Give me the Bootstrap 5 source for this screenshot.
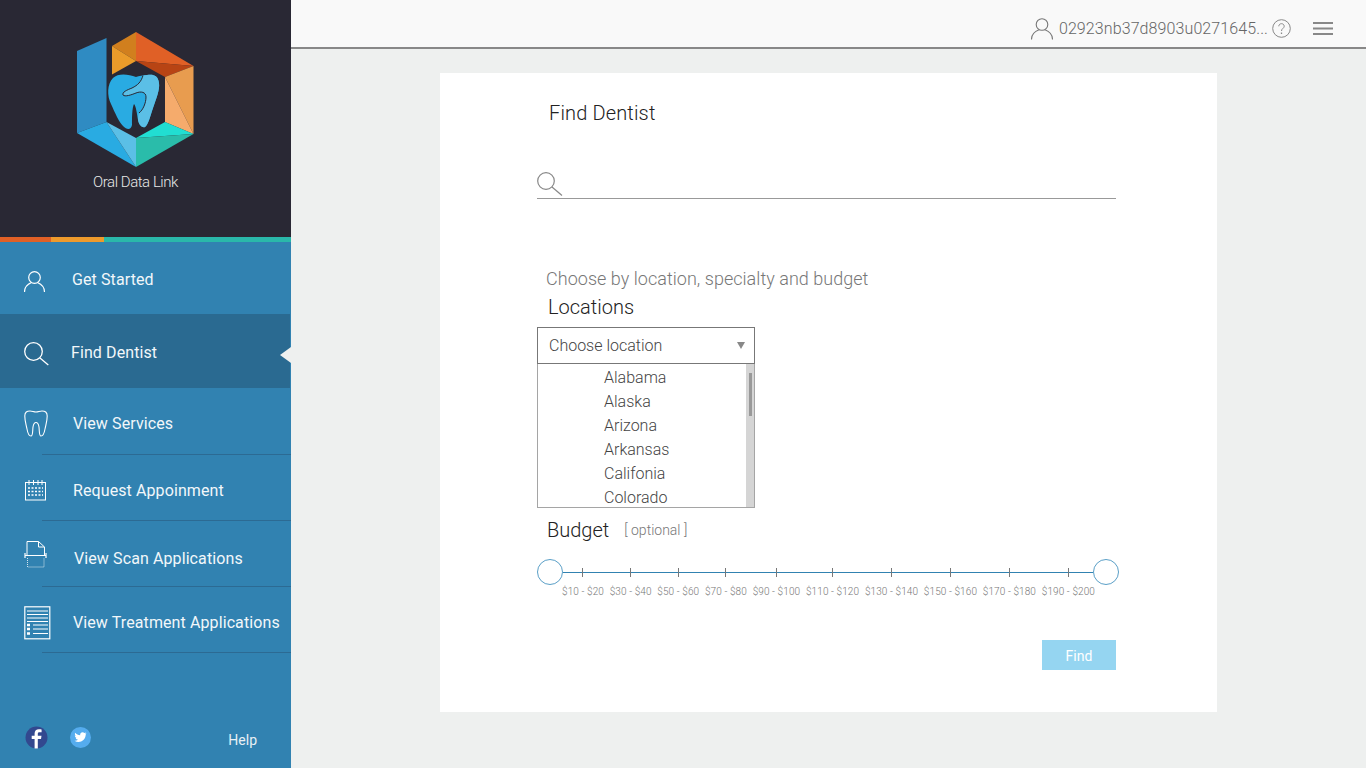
<!DOCTYPE html>
<html lang="en">
<head>
    <meta charset="UTF-8">
    <meta name="viewport" content="width=device-width, initial-scale=1.0">
    <title>Find Dentist - Oral Data Link</title>

    <!-- Bootstrap CSS -->
    <link href="https://cdn.jsdelivr.net/npm/bootstrap@5.3.0/dist/css/bootstrap.min.css" rel="stylesheet">
    <style>
        body { font-family: Roboto, "Liberation Sans", sans-serif; background: #eef0ef; overflow: hidden; }

        /* sidebar */
        .side-panel { width: 291px; height: 768px; background: #3182b1; }
        .logo-area { height: 237px; background: #292834; padding: 25px 0 0 70px; }
        .logo-area svg { display: block; }
        .logo-name { width: 131px; margin-top: 2px; font-size: 15px; line-height: 18px; font-weight: 300; color: #e8e8e8; letter-spacing: -.45px; text-align: center; }
        .stripe { height: 5px; }
        .stripe-orange { width: 51px; background: #e06026; }
        .stripe-amber { width: 53px; background: #ee9a2c; }
        .stripe-teal { background: #2ab8aa; }
        .side-link { height: 66px; padding: 8px 0 8px 24px; color: #f2f7fa; font-size: 16px; letter-spacing: .1px; white-space: nowrap; position: relative; }
        .side-link:hover { color: #fff; }
        .side-link.line-below::after { content: ""; position: absolute; left: 42px; right: 0; bottom: -1px; height: 1px; background: #2c6a93; }
        .side-link.active-link { width: 290px; background: #2a6a91; color: #f2f7fa; }
        .side-link.active-link::before { content: ""; position: absolute; right: -1px; top: 33px; border: 8px solid transparent; border-right: 11px solid #eef0ef; border-left: 0; }
        .link-top { height: 72px; padding-top: 12px; }
        .link-active { height: 74px; padding-top: 12px; }
        .link-services { padding-top: 14px; }
        .link-request { padding-top: 16px; }
        .link-scan { padding-top: 20px; }
        .link-treatment { padding-top: 16px; }
        .side-ico { width: 49px; flex-shrink: 0; display: block; }
        .ico-user { margin: 4px -1px 0 0; }
        .ico-find { margin: 2px -2px 0 0; }
        .ico-tooth { margin-bottom: 2px; }
        .ico-cal { margin-bottom: 2px; }
        .ico-scan { margin: 0 1px 10px 0; }
        .side-foot { padding: 0 34px 17px 25px; color: #e8f0f5; font-size: 14px; }
        .foot-twitter { margin: 1px 0 0 22px; }
        .foot-help { margin: 4px 0 0 auto; }

        /* top bar */
        .top-strip { height: 49px; background: #f9f9f9; border-bottom: 2px solid #888; padding: 10px 33px 0 0; color: #666; }
        .user-code { font-size: 16px; font-weight: 300; margin-left: 6px; margin-right: 4px; letter-spacing: .1px; }
        .menu-ico { margin-left: 22px; }

        /* find card */
        .find-sheet { width: 777px; height: 639px; margin: 24px auto 0; background: #fff; padding: 28px 101px 0 97px; }
        .sheet-title { font-size: 20px; font-weight: 300; line-height: 24px; letter-spacing: .15px; color: #222; margin: 0; padding-left: 12px; }
        .search-row { margin-top: 47px; height: 27px; border-bottom: 1px solid #999; }
        .search-row input { border: 0; background: transparent; outline: 0; }
        .pick-text { margin: 68px 0 0 9px; font-size: 18px; font-weight: 300; line-height: 24px; color: #777; letter-spacing: .03px; }
        .field-label { font-size: 20px; font-weight: 300; line-height: 24px; color: #222; }
        .label-loc { margin: 4px 0 8px 11px; }
        .label-budget { margin: 10px 0 0 10px; }
        .loc-picker { width: 218px; height: 37px; border: 1px solid #777; padding: 0 11px; font-size: 16px; font-weight: 300; color: #444; }
        .caret-down { border: 4px solid transparent; border-top: 7px solid #888; border-bottom: 0; margin-right: -2px; }
        .loc-list { width: 218px; height: 144px; border: 1px solid #a5a5a5; border-top: 0; overflow: hidden; }
        .loc-list ul { padding: 2px 0 0 66px; font-size: 16px; font-weight: 300; line-height: 24px; color: #444; }
        .scroll-track { width: 8px; background: #d5d5d5; padding: 9px 2px 0 3px; flex-shrink: 0; }
        .scroll-thumb { height: 43px; background: #999; }
        .optional-note { font-size: 14px; font-weight: 300; color: #777; margin-left: 15px; }
        .price-range { margin-top: 17px; margin-right: -3px; }
        .range-knob { width: 26px; height: 26px; border: 1px solid #5a9fc7; border-radius: 50%; background: #fff; flex-shrink: 0; }
        .range-mid { position: relative; padding-top: 9px; }
        .range-mid::before { content: ""; position: absolute; left: 0; right: 0; top: 13px; height: 1px; background: #3182b1; }
        .range-stops { margin: 0 -2px 0 -1px; }
        .range-tick { width: 1px; height: 9px; background: #777; position: relative; }
        .range-stop span { font-size: 10px; font-weight: 300; line-height: 12px; letter-spacing: .1px; color: #777; margin-top: 9px; white-space: nowrap; }
        .find-action { margin-top: 42px; }
        .find-btn { width: 74px; height: 30px; padding: 2px 0 0; border: 0; border-radius: 0; background: #95d5f1; color: #fff; font-size: 14px; }
        .find-btn:hover { background: #95d5f1; color: #fff; }
    </style>
</head>
<body>

<div class="d-flex">

    <!-- Sidebar -->
    <aside class="side-panel d-flex flex-column flex-shrink-0">
        <div class="logo-area">
            <svg width="131" height="146" viewBox="70 25 131 146">
                <polygon points="77,51 106.5,38 106.5,122 77,133" fill="#2f8bc2"/>
                <polygon points="112,46 136,32 136,61" fill="#d17f1e"/>
                <polygon points="112,46 136,61 112,74.500" fill="#ea9b2a"/>
                <polygon points="136,32 193.500,66 136,61" fill="#e06026"/>
                <polygon points="136,61 193.500,66 165,77" fill="#b84414"/>
                <polygon points="193.500,66 193.500,134 165,77" fill="#e89c4f"/>
                <polygon points="165,77 193.500,134 165,122" fill="#f5ab6c"/>
                <polygon points="165,122 193.500,134 136,138" fill="#21ded2"/>
                <polygon points="136,138 193.500,134 136,167" fill="#2abcaa"/>
                <polygon points="77,133 106.500,122 136,167" fill="#29abe2"/>
                <polygon points="106.500,122 136,138 136,167" fill="#5bbfe6"/>
                <path d="M136 77C128 74 118 73 113 78C107 84 107 96 111 104C115 113 119 122 123 126C127 130 131 130 132 125C132 118 132 108 134 104C136 106 137 114 138 120C139 125 142 128 145 127C148 125 150 117 153 108C156 99 160 90 159 83C158 75 153 74 147 75C143 75 139 76 136 77Z" fill="#29abe2"/>
                <path d="M143 75.500C141 82 138 85 132 88C127 90 122 92 123 95C125 97 131 95 136 93C141 91 146 92 146 97C146 103 143 110 139 113C138 116 138 118 138 120C139 125 142 128 145 127C148 125 150 117 153 108C156 99 160 90 159 83C158 75 153 74 147 75Z" fill="#5bbfe6"/>
                <path d="M143 75.500C141 82 138 85 132 88C127 90 122 92 123 95C125 97 131 95 136 93C141 91 146 92 146 97C146 103 143 110 139 113" fill="none" stroke="#292834" stroke-width="1"/>
            </svg>
            <div class="logo-name">Oral Data Link</div>
        </div>
        <div class="d-flex">
            <div class="stripe stripe-orange"></div>
            <div class="stripe stripe-amber"></div>
            <div class="stripe stripe-teal flex-grow-1"></div>
        </div>

        <nav class="nav flex-column">
            <a class="nav-link side-link link-top d-flex align-items-center" href="#">
                <svg class="side-ico ico-user" height="22" viewBox="0 0 49 22" fill="none" stroke="#fff" stroke-width="1.200"><circle cx="10.500" cy="6.500" r="5.800"/><path d="M.5 21C.5 15 4 13 7.500 11.500M20.500 21C20.500 15 17 13 13.500 11.500"/></svg>
                Get Started
            </a>
            <a class="nav-link side-link link-active active-link d-flex align-items-center" href="#">
                <svg class="side-ico ico-find" height="24" viewBox="0 0 49 24" fill="none" stroke="#fff" stroke-width="1.300"><circle cx="9.500" cy="9.500" r="8.800"/><path d="M16 16L24.300 23"/></svg>
                Find Dentist
            </a>
            <a class="nav-link side-link link-services line-below d-flex align-items-center" href="#">
                <svg class="side-ico ico-tooth" height="27" viewBox="0 0 49 27" fill="none" stroke="#fff" stroke-width="1.100"><path d="M6 1C3 1 .8 2 .8 6C.8 11 2 14 3 19C3.700 23 5 26 7 26C9 26 8.500 21 9 17C9.500 14 10 12.500 12 12.500C14 12.500 14.500 14 15 17C15.500 21 15 26 17 26C19 26 20.300 23 21 19C22 14 23.200 11 23.200 6C23.200 2 21 1 18 1C16 1 14 2 12 2C10 2 8 1 6 1Z"/></svg>
                View Services
            </a>
            <a class="nav-link side-link link-request line-below d-flex align-items-center" href="#">
                <svg class="side-ico ico-cal" height="21" viewBox="0 0 49 21" fill="none" stroke="#fff"><rect x="1.500" y="2.500" width="20" height="17.500"/><path d="M5 0V5M9.500 0V5M14 0V5M18 0V5"/><path d="M4 8H19M4 11.500H19M4 15H19" stroke-dasharray="2 1.500" stroke-width="1.500"/></svg>
                Request Appoinment
            </a>
            <a class="nav-link side-link link-scan line-below d-flex align-items-center" href="#">
                <svg class="side-ico ico-scan" height="28" viewBox="0 0 49 28" fill="none" stroke="#fff"><path d="M3 15V1.500H14.500L20.500 7V15"/><path d="M14.500 1.500V7H20.500"/><path d="M1 15.500H22M1 13V18M22 13V18" stroke-width="1.200"/><path d="M3.500 18V27H20V18" stroke-dasharray="1 1" opacity=".8"/></svg>
                View Scan Applications
            </a>
            <a class="nav-link side-link link-treatment line-below d-flex align-items-center" href="#">
                <svg class="side-ico" height="34" viewBox="0 0 49 34" fill="none" stroke="#fff"><rect x=".8" y=".8" width="25" height="32" stroke-width="1.200"/><path d="M3 5H24M3 8.500H24M3 12H24M3 15.500H24M9 19H24M9 23H24M9 27.500H24"/><path d="M3 19H6M3 23H6M3 27.500H6" stroke-width="2.400"/></svg>
                View Treatment Applications
            </a>
        </nav>

        <div class="side-foot mt-auto d-flex align-items-start">
            <svg width="23" height="23" viewBox="0 0 23 23"><circle cx="11.500" cy="11.500" r="11" fill="#32488f"/><path d="M12.800 22.500V13H16L16.500 9.700H12.800V7.800C12.800 6.800 13.200 6.200 14.400 6.200H16.600V3.400C16 3.300 15 3.200 13.900 3.200C11.300 3.200 9.600 4.800 9.600 7.400V9.700H6.700V13H9.600V22.500Z" fill="#fff"/></svg>
            <svg class="foot-twitter" width="21" height="21" viewBox="0 0 21 21"><circle cx="10.500" cy="10.500" r="10.500" fill="#55acee"/><path d="M16.500 6.500C16 6.700 15.500 6.900 15 6.900C15.500 6.600 16 6.100 16.200 5.500C15.700 5.800 15.100 6 14.500 6.100C13.400 5 11.700 5 10.800 6C10.200 6.600 10 7.500 10.200 8.300C8.200 8.200 6.400 7.200 5.200 5.700C4.600 6.800 4.900 8.100 5.900 8.800C5.500 8.800 5.100 8.700 4.800 8.500C4.800 9.700 5.600 10.700 6.800 11C6.400 11.100 6 11.100 5.700 11C6 12 7 12.700 8 12.800C7 13.600 5.700 14 4.500 13.800C7.300 15.600 11 15.400 13.400 13.100C15.100 11.500 15.800 9.300 15.700 7.600C16 7.300 16.300 6.900 16.500 6.500Z" fill="#fff"/></svg>
            <span class="foot-help">Help</span>
        </div>
    </aside>

    <main class="flex-grow-1">
        <!-- Top bar -->
        <header class="top-strip d-flex align-items-center justify-content-end">
            <svg width="22" height="22" viewBox="0 0 22 22" fill="none" stroke="#777" stroke-width="1.100"><circle cx="11" cy="6.500" r="5.800"/><path d="M.5 21.500C.5 15.500 4 13.500 8 11.800M21.500 21.500C21.500 15.500 18 13.500 14 11.800"/></svg>
            <span class="user-code">02923nb37d8903u0271645...</span>
            <svg width="19" height="19" viewBox="0 0 19 19" fill="none" stroke="#888"><circle cx="9.500" cy="9.500" r="8.800"/><path d="M6.800 7.300C6.800 3.800 12.200 3.800 12.200 7.300C12.200 9.300 9.500 9.500 9.500 12"/><path d="M9.500 13.500V15" stroke-width="1.300"/></svg>
            <svg class="menu-ico" width="20" height="13" viewBox="0 0 20 13" stroke="#888" stroke-width="2"><path d="M0 1H20M0 6.500H20M0 12H20"/></svg>
        </header>

        <!-- Find form -->
        <div class="find-sheet">
            <h1 class="sheet-title">Find Dentist</h1>

            <div class="search-row d-flex align-items-start">
                <svg width="26" height="25" viewBox="0 0 26 25" fill="none" stroke="#888" stroke-width="1.200" class="flex-shrink-0"><circle cx="9" cy="9" r="8.300"/><path d="M15 15L25 23.500"/></svg>
                <input type="text" class="flex-grow-1" aria-label="Search">
            </div>

            <p class="pick-text mb-0">Choose by location, specialty and budget</p>
            <div class="field-label label-loc">Locations</div>

            <div class="loc-picker d-flex align-items-center justify-content-between">
                <span>Choose location</span>
                <span class="caret-down"></span>
            </div>
            <div class="loc-list d-flex">
                <ul class="list-unstyled flex-grow-1 mb-0">
                    <li>Alabama</li>
                    <li>Alaska</li>
                    <li>Arizona</li>
                    <li>Arkansas</li>
                    <li>Califonia</li>
                    <li>Colorado</li>
                </ul>
                <div class="scroll-track"><div class="scroll-thumb"></div></div>
            </div>

            <div class="field-label label-budget d-flex align-items-center">Budget <span class="optional-note">[ optional ]</span></div>

            <div class="price-range d-flex align-items-start">
                <div class="range-knob"></div>
                <div class="range-mid flex-grow-1">
                    <div class="range-stops d-flex justify-content-between">
                        <div class="range-stop d-flex flex-column align-items-center"><div class="range-tick"></div><span>$10 - $20</span></div>
                        <div class="range-stop d-flex flex-column align-items-center"><div class="range-tick"></div><span>$30 - $40</span></div>
                        <div class="range-stop d-flex flex-column align-items-center"><div class="range-tick"></div><span>$50 - $60</span></div>
                        <div class="range-stop d-flex flex-column align-items-center"><div class="range-tick"></div><span>$70 - $80</span></div>
                        <div class="range-stop d-flex flex-column align-items-center"><div class="range-tick"></div><span>$90 - $100</span></div>
                        <div class="range-stop d-flex flex-column align-items-center"><div class="range-tick"></div><span>$110 - $120</span></div>
                        <div class="range-stop d-flex flex-column align-items-center"><div class="range-tick"></div><span>$130 - $140</span></div>
                        <div class="range-stop d-flex flex-column align-items-center"><div class="range-tick"></div><span>$150 - $160</span></div>
                        <div class="range-stop d-flex flex-column align-items-center"><div class="range-tick"></div><span>$170 - $180</span></div>
                        <div class="range-stop d-flex flex-column align-items-center"><div class="range-tick"></div><span>$190 - $200</span></div>
                    </div>
                </div>
                <div class="range-knob"></div>
            </div>

            <div class="find-action d-flex justify-content-end">
                <button type="button" class="btn find-btn">Find</button>
            </div>
        </div>
    </main>
</div>

<!-- Bootstrap JS -->
<script src="https://cdn.jsdelivr.net/npm/bootstrap@5.3.0/dist/js/bootstrap.bundle.min.js"></script>
</body>
</html>
